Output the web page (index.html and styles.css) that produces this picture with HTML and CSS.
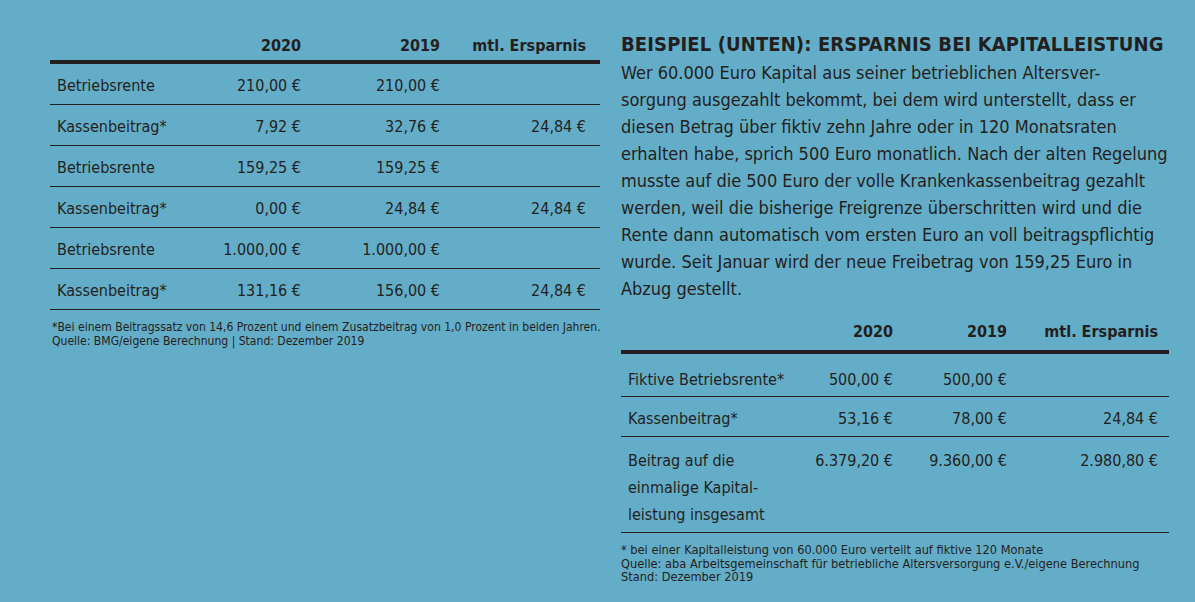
FILE: index.html
```html
<!DOCTYPE html>
<html lang="de">
<head>
<meta charset="utf-8">
<title>Betriebsrente Ersparnis</title>
<link rel="stylesheet" href="styles.css">
</head>
<body>
<div class="page">
  <section class="left">
    <div class="tbl tbl-left">
      <div class="row head"><span></span><span>2020</span><span>2019</span><span>mtl. Ersparnis</span></div>
      <div class="row"><span>Betriebsrente</span><span>210,00 €</span><span>210,00 €</span><span></span></div>
      <div class="row"><span>Kassenbeitrag*</span><span>7,92 €</span><span>32,76 €</span><span>24,84 €</span></div>
      <div class="row"><span>Betriebsrente</span><span>159,25 €</span><span>159,25 €</span><span></span></div>
      <div class="row"><span>Kassenbeitrag*</span><span>0,00 €</span><span>24,84 €</span><span>24,84 €</span></div>
      <div class="row"><span>Betriebsrente</span><span>1.000,00 €</span><span>1.000,00 €</span><span></span></div>
      <div class="row"><span>Kassenbeitrag*</span><span>131,16 €</span><span>156,00 €</span><span>24,84 €</span></div>
    </div>
    <p class="note note-left">*Bei einem Beitragssatz von 14,6 Prozent und einem Zusatzbeitrag von 1,0 Prozent in beiden Jahren.<br>Quelle: BMG/eigene Berechnung | Stand: Dezember 2019</p>
  </section>
  <section class="right">
    <h2 class="title">BEISPIEL (UNTEN): ERSPARNIS BEI KAPITALLEISTUNG</h2>
    <p class="body">Wer 60.000 Euro Kapital aus seiner betrieblichen Altersver-<br>sorgung ausgezahlt bekommt, bei dem wird unterstellt, dass er<br>diesen Betrag über fiktiv zehn Jahre oder in 120 Monatsraten<br>erhalten habe, sprich 500 Euro monatlich. Nach der alten Regelung<br>musste auf die 500 Euro der volle Krankenkassenbeitrag gezahlt<br>werden, weil die bisherige Freigrenze überschritten wird und die<br>Rente dann automatisch vom ersten Euro an voll beitragspflichtig<br>wurde. Seit Januar wird der neue Freibetrag von 159,25 Euro in<br>Abzug gestellt.</p>
    <div class="tbl tbl-right">
      <div class="row head"><span></span><span>2020</span><span>2019</span><span>mtl. Ersparnis</span></div>
      <div class="row r1"><span>Fiktive Betriebsrente*</span><span>500,00 €</span><span>500,00 €</span><span></span></div>
      <div class="row r2"><span>Kassenbeitrag*</span><span>53,16 €</span><span>78,00 €</span><span>24,84 €</span></div>
      <div class="row r3"><span>Beitrag auf die<br>einmalige Kapital-<br>leistung insgesamt</span><span>6.379,20 €</span><span>9.360,00 €</span><span>2.980,80 €</span></div>
    </div>
    <p class="note note-right">* bei einer Kapitalleistung von 60.000 Euro verteilt auf fiktive 120 Monate<br>Quelle: aba Arbeitsgemeinschaft für betriebliche Altersversorgung e.V./eigene Berechnung<br>Stand: Dezember 2019</p>
  </section>
</div>
</body>
</html>
```

FILE: styles.css
```css
html, body {
  margin: 0;
  padding: 0;
}
body {
  background: #63adc8;
  color: #231f20;
  font-family: "DejaVu Sans", sans-serif;
  font-stretch: condensed;
  width: 1195px;
  height: 602px;
  overflow: hidden;
}
.page {
  display: flex;
  padding-left: 50px;
  gap: 21px;
}
.left {
  width: 550px;
  padding-top: 28px;
}
.right {
  width: 548px;
  padding-top: 32px;
}
.tbl {
  display: flex;
  flex-direction: column;
}
.row {
  display: grid;
  align-items: start;
  font-size: 16px;
  border-bottom: 1px solid #231f20;
  white-space: nowrap;
}
.row span:not(:first-child) {
  text-align: right;
}
.tbl-left .row {
  grid-template-columns: 140px 111px 139px 160px;
  line-height: 18px;
  padding-top: 13px;
  box-sizing: border-box;
  height: 41px;
}
.tbl-left .row span:first-child {
  padding-left: 7px;
}
.tbl-left .row span:last-child {
  padding-right: 14px;
}
.row.head {
  font-weight: bold;
  border-bottom: 4px solid #231f20;
  height: auto !important;
  padding-top: 8px;
  padding-bottom: 8px;
}
.tbl-left .row.head {
  padding-top: 9px;
  height: 36px !important;
}
.note {
  margin: 0;
  white-space: nowrap;
}
.note-left {
  padding-top: 10px;
  padding-left: 2px;
  font-size: 12.05px;
  line-height: 14px;
}
.title {
  margin: 0;
  font-size: 20px;
  line-height: 24px;
  font-weight: bold;
  letter-spacing: 0.12px;
  white-space: nowrap;
}
.body {
  margin: 3px 0 0;
  font-size: 18px;
  line-height: 27px;
  white-space: nowrap;
}
.tbl-right {
  margin-top: 21px;
}
.tbl-right .row {
  grid-template-columns: 165px 107px 114px 162px;
  line-height: 18px;
}
.tbl-right .row span:first-child {
  padding-left: 7px;
}
.tbl-right .row span:last-child {
  padding-right: 11px;
}
.tbl-right .row.head {
  padding-top: 0;
  padding-bottom: 9px;
}
.tbl-right .r1 {
  padding-top: 17px;
  height: 43px;
  box-sizing: border-box;
}
.tbl-right .r2 {
  padding-top: 13px;
  height: 40px;
  box-sizing: border-box;
}
.tbl-right .r3 {
  padding-top: 10px;
  padding-bottom: 4px;
  line-height: 27px;
}
.note-right {
  padding-top: 10px;
  font-size: 12.7px;
  line-height: 13.5px;
}
```
